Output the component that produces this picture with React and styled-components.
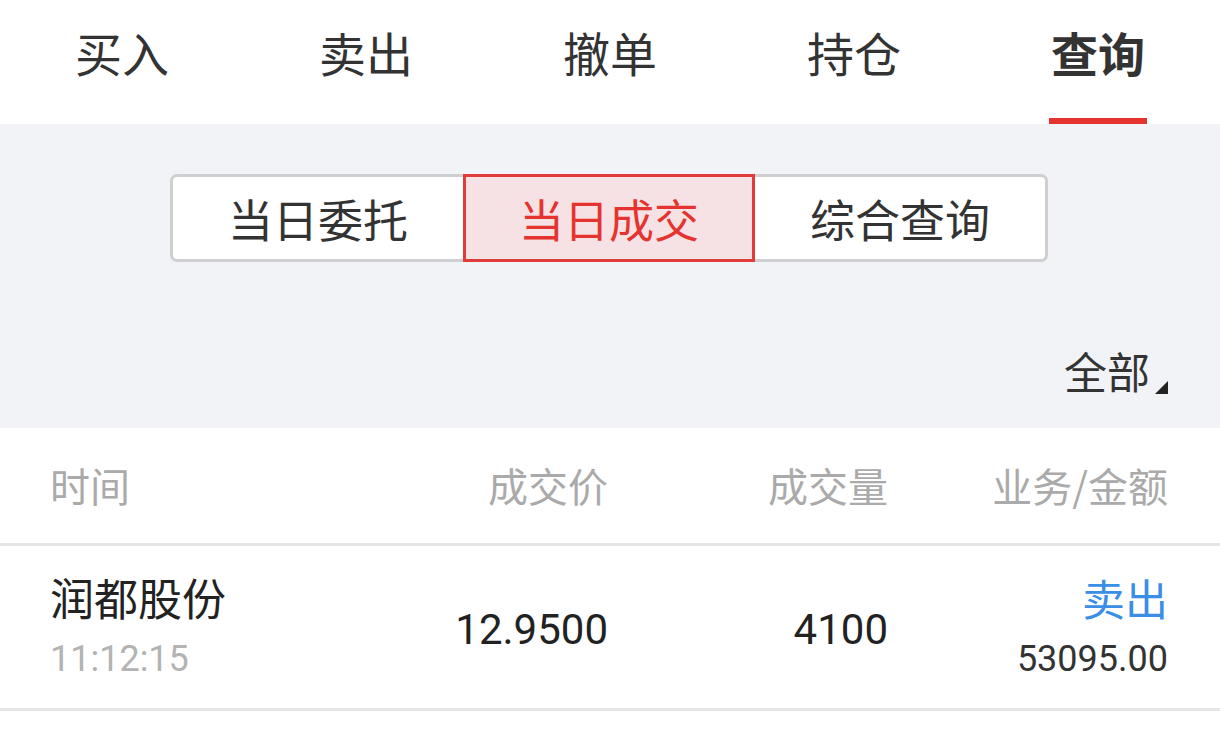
import React from 'react'
import styled, { createGlobalStyle } from 'styled-components'

const GlobalStyle = createGlobalStyle`
    body {
        margin: 0;
        background: #ffffff;
        font-family: "Noto Sans CJK SC", "Noto Sans", sans-serif;
        color: #333;
    }
`

const Page = styled.div`
    width: 1220px;
`

const TabBar = styled.div`
    height: 124px;
    display: grid;
    grid-template-columns: repeat(5, 1fr);
    background: #fff;
`

const Tab = styled.div`
    position: relative;
    display: flex;
    justify-content: center;
    padding-top: 20px;
    font-size: 47px;
    line-height: 64px;
    color: #333;
    font-weight: ${p => (p.active ? 700 : 400)};
    &::after {
        content: '';
        display: ${p => (p.active ? 'block' : 'none')};
        position: absolute;
        bottom: 0;
        left: 50%;
        transform: translateX(-50%);
        width: 98px;
        height: 6px;
        background: #e5332f;
    }
`

const Filter = styled.div`
    background: #f2f3f7;
    padding: 50px 52px 28px;
    display: flex;
    flex-direction: column;
`

const Segmented = styled.div`
    align-self: center;
    display: flex;
    border: 3px solid #cfcfd2;
    border-radius: 7px;
    background: #fff;
    margin-right: 2px;
`

const Segment = styled.div`
    width: ${p => (p.active ? '286px' : '290px')};
    height: 82px;
    margin: ${p => (p.active ? '-3px 0' : '0')};
    border: ${p => (p.active ? '3px solid #e03c3c' : 'none')};
    background: ${p => (p.active ? '#f6e2e5' : 'transparent')};
    color: ${p => (p.active ? '#e5332f' : '#333')};
    display: flex;
    align-items: center;
    justify-content: center;
    font-size: 45px;
`

const AllPicker = styled.div`
    align-self: flex-end;
    margin-top: 78px;
    position: relative;
    font-size: 43px;
    line-height: 60px;
    color: #333;
    padding-right: 18px;
    &::after {
        content: '';
        position: absolute;
        right: 0;
        bottom: 6px;
        width: 0;
        height: 0;
        border-left: 13px solid transparent;
        border-bottom: 13px solid #222;
    }
`

const Columns = styled.div`
    display: grid;
    grid-template-columns: 1fr 260px 280px 280px;
    padding: 0 52px 0 50px;
`

const HeaderRow = styled(Columns)`
    height: 115px;
    align-items: center;
    border-bottom: 3px solid #e6e6e9;
    color: #aaa;
    font-size: 40px;
`

const HeadCell = styled.div`
    text-align: ${p => p.align || 'right'};
    padding-bottom: 2px;
`

const DataRow = styled(Columns)`
    height: 162px;
    align-items: center;
    border-bottom: 3px solid #e6e6e9;
`

const NameCell = styled.div`
    display: flex;
    flex-direction: column;
    gap: 10px;
    padding-bottom: 4px;
`

const StockName = styled.div`
    font-size: 44px;
    line-height: 58px;
    color: #222;
`

const Time = styled.div`
    font-family: Roboto, "Noto Sans", sans-serif;
    font-size: 36px;
    line-height: 46px;
    color: #b3b3b3;
`

const Num = styled.div`
    text-align: right;
    font-family: Roboto, "Noto Sans", sans-serif;
    font-size: 42px;
    color: #222;
    padding-top: 4px;
`

const AmountCell = styled.div`
    display: flex;
    flex-direction: column;
    align-items: flex-end;
    gap: 10px;
    padding-bottom: 4px;
`

const Side = styled.div`
    font-size: 43px;
    line-height: 58px;
    color: #3a8ee6;
`

const Amount = styled.div`
    font-family: Roboto, "Noto Sans", sans-serif;
    font-size: 36px;
    line-height: 46px;
    color: #333;
`

const tabs = ['买入', '卖出', '撤单', '持仓', '查询']
const segments = ['当日委托', '当日成交', '综合查询']

const App = () => {
  return (
    <Page>
        <GlobalStyle />
        <TabBar>
            {tabs.map((t, i) => (
                <Tab key={t} active={i === 4}>{t}</Tab>
            ))}
        </TabBar>
        <Filter>
            <Segmented>
                {segments.map((s, i) => (
                    <Segment key={s} active={i === 1}>{s}</Segment>
                ))}
            </Segmented>
            <AllPicker>全部</AllPicker>
        </Filter>
        <HeaderRow>
            <HeadCell align="left">时间</HeadCell>
            <HeadCell>成交价</HeadCell>
            <HeadCell>成交量</HeadCell>
            <HeadCell>业务/金额</HeadCell>
        </HeaderRow>
        <DataRow>
            <NameCell>
                <StockName>润都股份</StockName>
                <Time>11:12:15</Time>
            </NameCell>
            <Num>12.9500</Num>
            <Num>4100</Num>
            <AmountCell>
                <Side>卖出</Side>
                <Amount>53095.00</Amount>
            </AmountCell>
        </DataRow>
    </Page>
  )
}

export default App
